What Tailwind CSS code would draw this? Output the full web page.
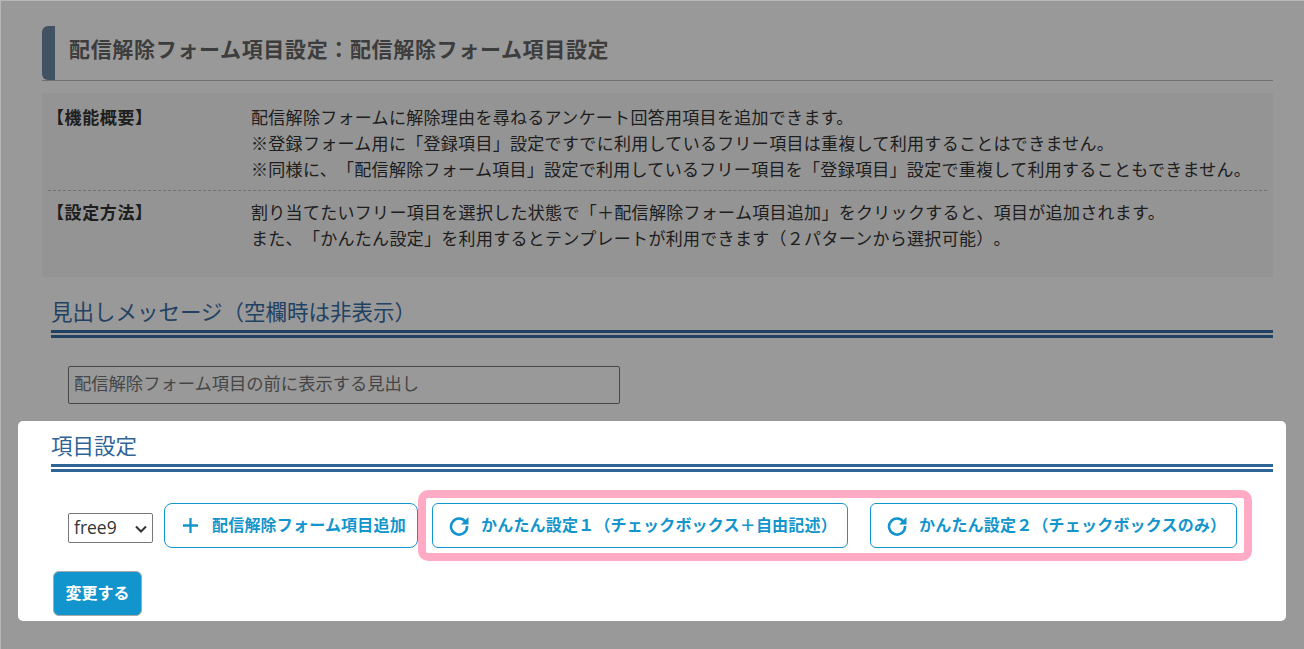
<!DOCTYPE html>
<html lang="ja">
<head>
    <meta charset="UTF-8">
    <title>配信解除フォーム項目設定</title>
    <script src="https://cdn.jsdelivr.net/npm/@tailwindcss/browser@4"></script>
</head>
<body class="bg-white">
    <div class="relative w-[1304px] h-[649px] overflow-hidden bg-white text-[#333] [text-spacing-trim:space-all] font-['Liberation_Sans','Noto_Sans_CJK_JP',sans-serif]">
        <!-- page under the dim layer -->
        <main class="pt-[26px] pl-[42px] pr-[31px]">
            <h1 class="h-[55px] flex items-center pl-[13px] border-b border-[#bbb]">
                <span class="flex items-center h-full pl-[14px] pb-[6px] border-l-[13px] border-[#6d8aa6] rounded-l-[6px] -ml-[13px] text-[21px] tracking-[0.66px] font-bold text-[#666]">配信解除フォーム項目設定：配信解除フォーム項目設定</span>
            </h1>
            <div class="mt-[12px] h-[184px] bg-[#f7f7f7] px-[6px] pt-[13px] text-[17px] leading-[26px] tracking-[0.3px]">
                <div class="flex border-b border-dashed border-[#bbb] h-[85px]">
                    <div class="w-[204px] font-bold -ml-[1px] tracking-[0.6px]">【機能概要】</div>
                    <div class="whitespace-nowrap">
                        <p>配信解除フォームに解除理由を尋ねるアンケート回答用項目を追加できます。</p>
                        <p>※登録フォーム用に「登録項目」設定ですでに利用しているフリー項目は重複して利用することはできません。</p>
                        <p>※同様に、「配信解除フォーム項目」設定で利用しているフリー項目を「登録項目」設定で重複して利用することもできません。</p>
                    </div>
                </div>
                <div class="flex pt-[10px]">
                    <div class="w-[204px] font-bold -ml-[1px] tracking-[0.6px]">【設定方法】</div>
                    <div class="whitespace-nowrap">
                        <p>割り当てたいフリー項目を選択した状態で「＋配信解除フォーム項目追加」をクリックすると、項目が追加されます。</p>
                        <p>また、「かんたん設定」を利用するとテンプレートが利用できます（２パターンから選択可能）。</p>
                    </div>
                </div>
            </div>
            <h2 class="mt-[21px] ml-[9px] h-[32px] text-[21.5px] leading-[30px] text-[#3a6ea5]">見出しメッセージ（空欄時は非表示）</h2>
            <div class="ml-[9px] h-[8px] border-y-[3px] border-[#3a6ea5]"></div>
            <div class="mt-[28px] ml-[26px] w-[552px] h-[38px] border border-[#767676] rounded-[2px] flex items-center px-[5px] text-[17.3px] text-[#757575] bg-white">配信解除フォーム項目の前に表示する見出し</div>
        </main>

        <!-- dim layer -->
        <div class="absolute inset-0 bg-black/40 border-t border-l border-white/30"></div>

        <!-- highlighted panel -->
        <section class="absolute left-[18px] top-[421px] w-[1268px] h-[200px] bg-white rounded-[5px] pl-[33px] pr-[13px]">
            <h2 class="pt-[11px] h-[43px] text-[21.5px] leading-[30px] text-[#2f6496]">項目設定</h2>
            <div class="h-[8px] border-y-[3px] border-[#2f6496]"></div>
            <div class="mt-[18px] flex items-start pl-[17px]">
                <div class="relative mt-[23px] w-[85px] h-[30px] shrink-0">
                    <select class="appearance-none w-full h-full border border-[#767676] rounded-[2px] bg-white pl-[5px] pb-[2px] text-[17.5px] text-[#333] font-['Open_Sans',sans-serif]">
                        <option>free9</option>
                    </select>
                    <svg class="absolute right-[6px] top-[12px] pointer-events-none" width="12" height="8" viewBox="0 0 12 8" fill="none" stroke="#333" stroke-width="2"><path d="M1 1.5l5 5 5-5"/></svg>
                </div>
                <button class="mt-[13px] ml-[11px] w-[254px] h-[45px] shrink-0 border border-[#1295cc] rounded-[8px] flex items-center pl-[17px] gap-[13px] text-[16px] tracking-[0.2px] font-bold text-[#1295cc]">
                    <svg width="17" height="17" viewBox="0 0 18 18" fill="none" stroke="#1295cc" stroke-width="2.4"><path d="M9 1v16M1 9h16"/></svg>
                    配信解除フォーム項目追加
                </button>
                <div class="w-[834px] h-[71px] shrink-0 border-[8px] border-[#ffabc6] rounded-[10px] pl-[6px] pt-[5px] flex gap-[22px]">
                    <button class="w-[416px] h-[45px] shrink-0 border border-[#1295cc] rounded-[6px] flex items-center pl-[16px] gap-[12px] text-[16px] tracking-[0.2px] font-bold text-[#1295cc]">
                        <svg width="20" height="20" viewBox="0 0 20 20" fill="none"><path d="M16.6 6A8 8 0 1 0 18 10" stroke="#1295cc" stroke-width="2.6"/><path d="M19.5 1v7.5h-7.5z" fill="#1295cc"/></svg>
                        かんたん設定１（チェックボックス＋自由記述）
                    </button>
                    <button class="w-[367px] h-[45px] shrink-0 border border-[#1295cc] rounded-[6px] flex items-center pl-[16px] gap-[12px] text-[16px] tracking-[0.2px] font-bold text-[#1295cc]">
                        <svg width="20" height="20" viewBox="0 0 20 20" fill="none"><path d="M16.6 6A8 8 0 1 0 18 10" stroke="#1295cc" stroke-width="2.6"/><path d="M19.5 1v7.5h-7.5z" fill="#1295cc"/></svg>
                        かんたん設定２（チェックボックスのみ）
                    </button>
                </div>
            </div>
            <button class="mt-[10px] ml-[2px] w-[89px] h-[45px] rounded-[6px] border border-[#aaa] bg-[#1295cc] text-[16px] font-bold text-white">変更する</button>
        </section>
    </div>
</body>
</html>
